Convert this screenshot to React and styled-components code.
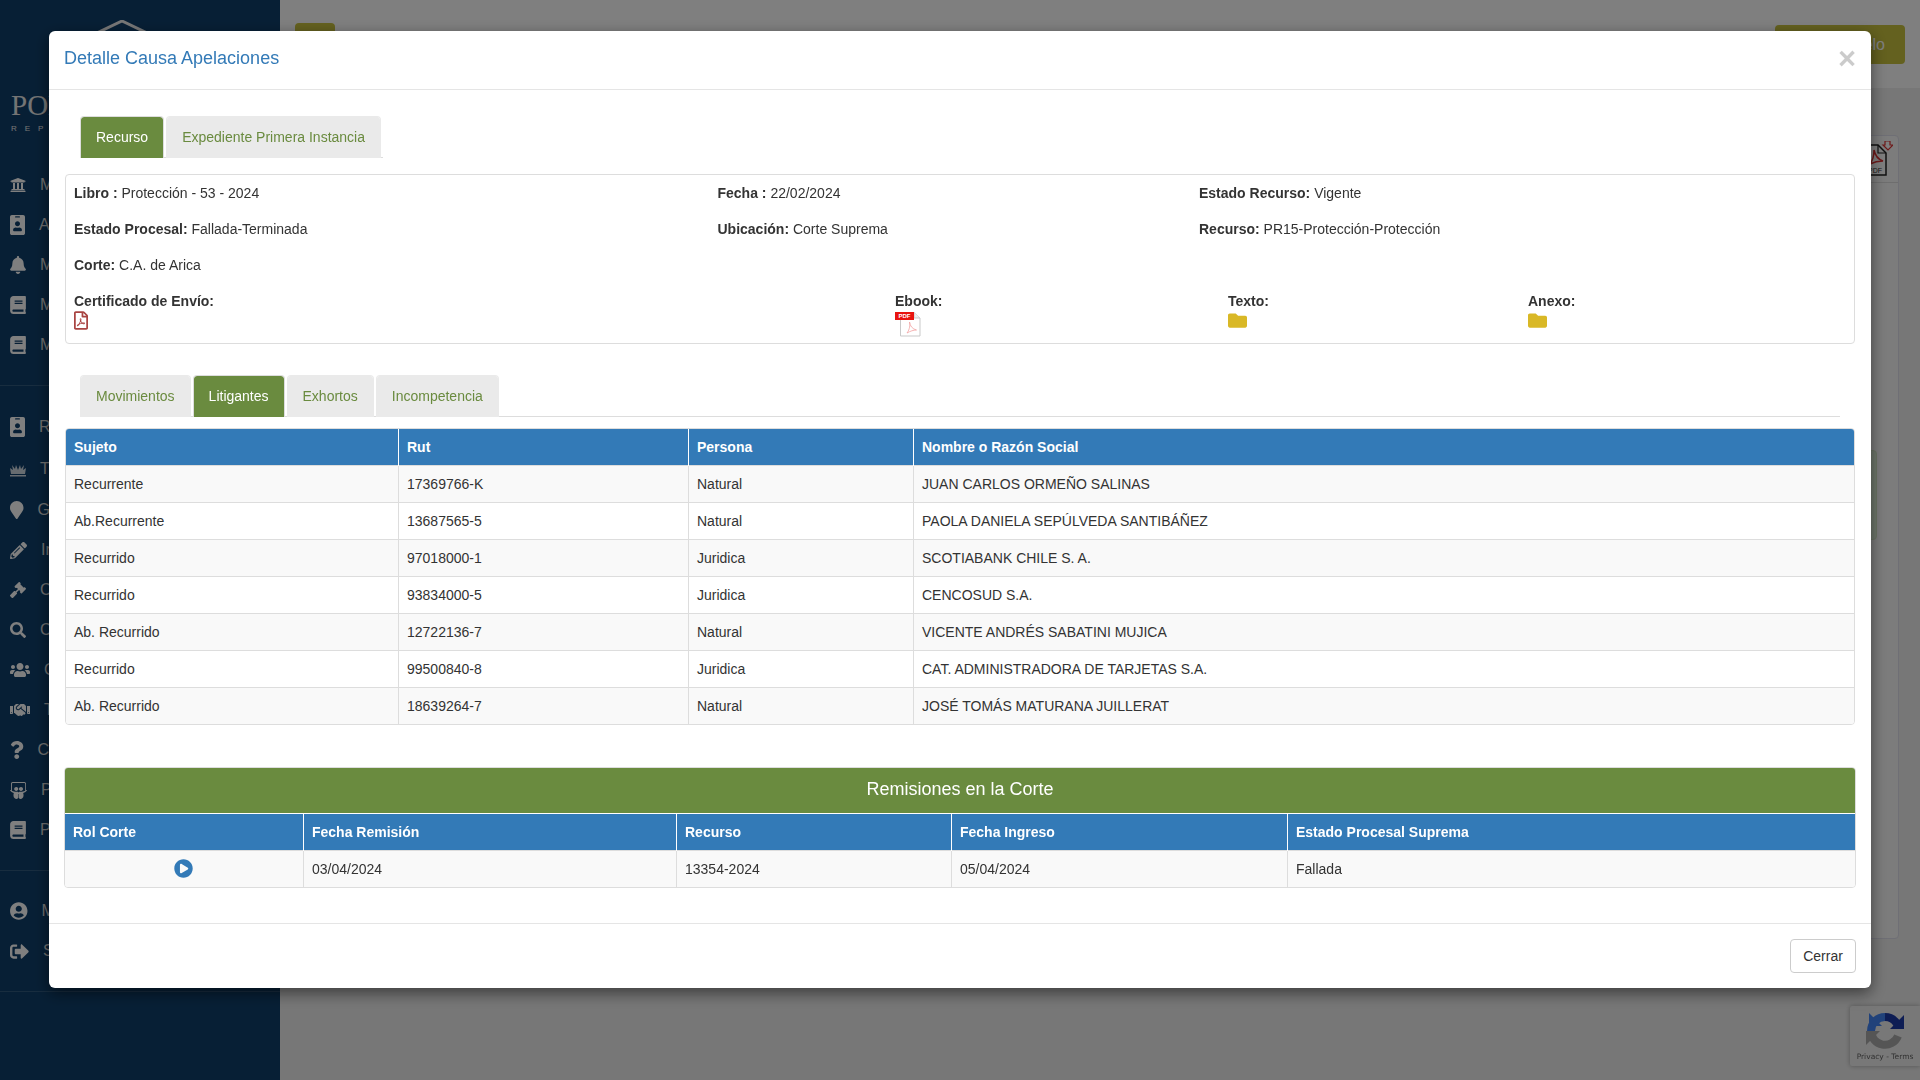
import React from "react";
import styled, { createGlobalStyle } from "styled-components";
import {
  FaUniversity, FaIdBadge, FaBell, FaBook, FaMapMarker, FaPencilAlt, FaGavel, FaSearch,
  FaUsers, FaHandshake, FaQuestion, FaSlideshare, FaUserCircle, FaSignOutAlt,
  FaRegFilePdf, FaFolder, FaPlayCircle,
} from "react-icons/fa";

const GREEN = "#6a8b3f";
const BLUE = "#337ab7";

const Global = createGlobalStyle`
  html, body { margin: 0; padding: 0; height: 100%; overflow: hidden; }
  body { font-family: "Liberation Sans", Arial, sans-serif; font-size: 14px; line-height: 20px; color: #333; background: #eee; }
  * { box-sizing: border-box; }
`;

const Page = styled.div`display: flex; height: 1080px; overflow: hidden;`;
const Sidebar = styled.aside`width: 280px; flex: none; background: #0f3f6b; color: #fff; display: flex; flex-direction: column;`;
const Brand = styled.div`height: 165px; padding: 20px 0 0 11px; display: flex; flex-direction: column; align-items: flex-start;`;
const Roof = styled.svg`display: block; margin-left: 84px; width: 54px; height: 20px; flex: none;`;
const BrandName = styled.div`margin-top: 50px; font-family: "Liberation Serif", serif; font-size: 29px; line-height: 30px; color: #e8e8e8; white-space: nowrap;`;
const BrandSub = styled.div`font-size: 8px; line-height: 12px; letter-spacing: 8px; color: #e8e8e8; white-space: nowrap; margin-top: 3px;`;
const NavGroup = styled.nav`padding: 20px 0; border-bottom: 1px solid rgba(255,255,255,.14);`;
const FirstGroup = styled(NavGroup)`padding-top: 0;`;
const NavItem = styled.div`height: ${p => (p.$tall ? 42 : 40)}px; display: flex; align-items: center; gap: 14px; padding-left: 10px; font-size: 16px; white-space: nowrap; color: #ddd;`;
const NavIcon = styled.span`flex: none; display: block; color: #fff; svg { display: block; width: ${p => p.$w}px; height: ${p => p.$h}px; }`;

const Main = styled.main`flex: 1; min-width: 0; display: flex; flex-direction: column;`;
const TopBar = styled.header`height: 88px; flex: none; background: #fff; display: flex; justify-content: space-between; align-items: flex-start; padding: 23px 15px 0 15px;`;
const SquareBtn = styled.div`width: 40px; height: 40px; border-radius: 4px; background: #c8c23e;`;
const WideBtn = styled.div`width: 130px; height: 39px; margin-top: 2px; border-radius: 4px; background: #c8c23e; color: #fff; font-size: 16px; display: flex; align-items: center; justify-content: flex-end; padding-right: 20px;`;
const Content = styled.div`flex: 1; padding: 47px 21px 0 15px; display: flex; flex-direction: column;`;
const BackPanel = styled.section`height: 804px; background: #f8f8f8; border: 1px solid #dedeea; border-radius: 4px; display: flex; flex-direction: column;`;
const BackHead = styled.div`height: 47px; flex: none; display: flex; justify-content: flex-end; padding: 5px 5px 0 0; border-bottom: 1px solid #ddd;`;
const BackBody = styled.div`padding: 267px 21px 0 15px;`;
const BackAlert = styled.div`height: 90px; background: #dff0d8; border: 1px solid #d6e9c6; border-radius: 4px;`;

const Overlay = styled.div`position: fixed; inset: 0; background: rgba(0,0,0,.5);`;

const Badge = styled.div`position: fixed; right: 0; top: 1006px; width: 70px; height: 60px; background: #f0f0f0; border-radius: 2px 0 0 2px; box-shadow: 0 0 5px rgba(0,0,0,.3); display: flex; flex-direction: column; align-items: center; padding-top: 6px; font-family: "DejaVu Sans", sans-serif; font-size: 7.5px; line-height: 10px; color: #666; white-space: nowrap; span { margin-top: 2px; }`;

const Modal = styled.div`position: fixed; top: 31px; left: 49px; width: 1822px; height: 957px; background: #fff; border-radius: 6px; box-shadow: 0 5px 15px rgba(0,0,0,.5); display: flex; flex-direction: column;`;
const ModalHead = styled.header`height: 59px; flex: none; padding: 0 15px; border-bottom: 1px solid #e5e5e5; display: flex; align-items: center; justify-content: space-between;`;
const ModalTitle = styled.h4`margin: -5px 0 0; font-size: 18px; font-weight: 400; line-height: 26px; color: ${BLUE};`;
const Close = styled.span`font-size: 31px; font-weight: 700; line-height: 26px; color: #000; opacity: .2; margin: -3px 0 0 0;`;
const ModalBody = styled.div`flex: 1; padding: 26px 16px 0 16px; display: flex; flex-direction: column;`;
const ModalFoot = styled.footer`flex: none; height: 65px; padding: 15px; border-top: 1px solid #e5e5e5; display: flex; justify-content: flex-end;`;
const CloseBtn = styled.button`width: 66px; height: 34px; padding: 0; font: inherit; color: #333; background: #fff; border: 1px solid #ccc; border-radius: 4px;`;

const Tabs = styled.ul`list-style: none; margin: 0 ${p => (p.$wide ? "15px" : "0")} 0 15px; padding: 0; display: flex; width: ${p => (p.$wide ? "auto" : "fit-content")}; border-bottom: 1px solid #ddd; height: 42px;`;
const Tab = styled.li`height: 42px; margin-right: 2px; padding: 10px 15px; border-radius: 4px 4px 0 0; border: 1px solid ${p => (p.$active ? "#ddd" : "#eaeaea")}; border-bottom: 0; background: ${p => (p.$active ? GREEN : "#eaeaea")}; background-clip: padding-box; color: ${p => (p.$active ? "#fff" : GREEN)}; white-space: nowrap;`;

const InfoPanel = styled.section`margin-top: 16px; height: 170px; border: 1px solid #ddd; border-radius: 4px; padding: 8px 8px 0;`;
const InfoRow = styled.div`display: grid; grid-template-columns: ${p => p.$cols}; margin-bottom: 16px; height: 20px;`;
const FileRow = styled.div`display: grid; grid-template-columns: 821px 333px 300px 1fr;`;
const FileCell = styled.div`display: flex; flex-direction: column; align-items: flex-start;`;
const Bold = styled.b`font-weight: 700;`;
const PdfLink = styled.span`color: #a94442; display: block; height: 18px; svg { display: block; width: 14px; height: 19px; }`;
const FolderLink = styled.span`color: #d9b826; display: block; svg { display: block; }`;

const SecondTabs = styled.div`margin-top: 31px;`;
const TablePanel = styled.section`margin-top: 11px; height: 297px; border: 1px solid #ddd; border-radius: 4px; overflow: hidden;`;
const Grid = styled.table`width: 100%; border-collapse: collapse; table-layout: fixed;`;
const Th = styled.th`height: 36px; padding: 8px; background: ${BLUE}; color: #fff; font-weight: 700; text-align: left; & + & { border-left: 1px solid #fff; padding-left: 8.5px; }`;
const Tr = styled.tr`background: ${p => (p.$odd ? "#f9f9f9" : "#fff")}; & + & { border-top: 1px solid #ddd; }`;
const Td = styled.td`height: 37px; padding: 8px; border-top: 1px solid #ddd; & + & { border-left: 1px solid #ddd; padding-left: 8.5px; } white-space: nowrap; text-align: ${p => (p.$center ? "center" : "left")}; svg { display: inline-block; vertical-align: top; }`;
const RemPanel = styled.section`margin: 42px -1px 0 -1px; height: 121px; border: 1px solid #ddd; border-radius: 4px; overflow: hidden;`;
const RemTitle = styled.h3`margin: 0; height: 46px; background: ${GREEN}; color: #fff; font-size: 18px; font-weight: 400; line-height: 43px; text-align: center; border-bottom: 1px solid #fff;`;

const PaperPdf = () => (
  <svg width="27" height="26" viewBox="0 0 27 26" style={{ display: "block" }}>
    <path d="M5.5 1.5H19L25 7V25H5.5Z" fill="#fff" stroke="#c9c9c9" />
    <path d="M19 1.5V7H25" fill="#eee" stroke="#c9c9c9" />
    <path d="M12 22c3-4 3-8 2.500-11 .5 4 3 7 7 8-3 0-6 1-9.500 3Z" fill="none" stroke="#f3a3a3" strokeWidth=".8" />
    <rect x="0" y="1" width="19" height="8" fill="#e8140f" />
    <text x="3.500" y="7.300" fontFamily="Liberation Sans, sans-serif" fontSize="6" fontWeight="700" fill="#fff">PDF</text>
  </svg>
);

const ThornIcon = () => (
  <svg viewBox="0 0 16 20" style={{ opacity: 0.8 }}>
    <path d="M0 16h16v1.500H0zM1 15 0 9l3 2-1-5 3 4 1-4 2 5 2-5 1 4 3-4-1 5 3-2-1 6Z" fill="#fff" />
  </svg>
);

const ExportPdf = () => (
  <svg width="28" height="38" viewBox="0 0 28 38">
    <path d="M1 4h12l8 8v22H1Z" fill="#fff" stroke="#222" strokeWidth="1.500" />
    <path d="M13 4v8h8" fill="none" stroke="#222" strokeWidth="1.200" />
    <path d="M5 23c3-4 4-8 4-14 1 5 3 9 9 11-5 0-9 1-13 3Z" fill="none" stroke="#d33" strokeWidth="1.500" />
    <path d="M20 0h5v4h3l-5 5-5-5h2Z" fill="#fff" stroke="#d33" strokeWidth="1.200" />
    <text x="3" y="32" fontFamily="Liberation Sans, sans-serif" fontSize="7" fill="#333">PDF</text>
  </svg>
);

const RecaptchaLogo = () => (
  <svg width="38" height="38" viewBox="0 0 38 38">
    <path d="M5 19A14 14 0 0 1 19 5" fill="none" stroke="#4285f4" strokeWidth="8" />
    <path d="M19 5A14 14 0 0 1 31 12" fill="none" stroke="#1c3aa9" strokeWidth="8" />
    <path d="M38 3v14H24Z" fill="#1c3aa9" />
    <path d="M32 24A14 14 0 0 1 5 19" fill="none" stroke="#ababab" strokeWidth="8" />
    <path d="M0 19h14L0 33Z" fill="#ababab" />
    <path d="M3 1l13 13H3Z" fill="#4285f4" />
  </svg>
);

const nav1 = [[FaUniversity, 16, 16, "Mi Estado Diario"], [FaIdBadge, 15, 20, "Agenda"], [FaBell, 16, 18, "Mis Alertas"], [FaBook, 16, 18, "Mis Causas"], [FaBook, 16, 18, "Mis Escritos"]];
const nav2 = [[FaIdBadge, 15, 20, "Remisiones"], [ThornIcon, 16, 20, "Tribunales"], [FaMapMarker, 13.5, 18, "Geolocalización"], [FaPencilAlt, 17, 17, "Ingreso"], [FaGavel, 16, 16, "Causas"], [FaSearch, 16, 16, "Consulta"], [FaUsers, 20, 16, "Consulta Unificada"], [FaHandshake, 20, 16, "Tramitación"], [FaQuestion, 13.5, 18, "Consultas"], [FaSlideshare, 17, 17, "Presentaciones"], [FaBook, 16, 18, "Preguntas"]];
const nav3 = [[FaUserCircle, 17.5, 18, "Mi Perfil"], [FaSignOutAlt, 19, 19, "Salir"]];

const litigantes = [
  ["Recurrente", "17369766-K", "Natural", "JUAN CARLOS ORMEÑO SALINAS"],
  ["Ab.Recurrente", "13687565-5", "Natural", "PAOLA DANIELA SEPÚLVEDA SANTIBÁÑEZ"],
  ["Recurrido", "97018000-1", "Juridica", "SCOTIABANK CHILE S. A."],
  ["Recurrido", "93834000-5", "Juridica", "CENCOSUD S.A."],
  ["Ab. Recurrido", "12722136-7", "Natural", "VICENTE ANDRÉS SABATINI MUJICA"],
  ["Recurrido", "99500840-8", "Juridica", "CAT. ADMINISTRADORA DE TARJETAS S.A."],
  ["Ab. Recurrido", "18639264-7", "Natural", "JOSÉ TOMÁS MATURANA JUILLERAT"],
];

const NavList = ({ items, tallFirst }) =>
  items.map(([Icon, w, h, label], i) => (
    <NavItem key={label} $tall={tallFirst && i < 2}>
      <NavIcon $w={w} $h={h}><Icon /></NavIcon>
      <span>{label}</span>
    </NavItem>
  ));

export default function App() {
  return (
    <>
      <Global />
      <Page>
        <Sidebar>
          <Brand>
            <Roof viewBox="0 0 54 20"><path d="M0 14 27 1l27 13" fill="none" stroke="#eee" strokeWidth="3" /></Roof>
            <BrandName>PODER JUDICIAL</BrandName>
            <BrandSub>REPÚBLICA</BrandSub>
          </Brand>
          <FirstGroup><NavList items={nav1} /></FirstGroup>
          <NavGroup><NavList items={nav2} tallFirst /></NavGroup>
          <NavGroup><NavList items={nav3} /></NavGroup>
        </Sidebar>
        <Main>
          <TopBar>
            <SquareBtn />
            <WideBtn>Ver Modelo</WideBtn>
          </TopBar>
          <Content>
            <BackPanel>
              <BackHead><ExportPdf /></BackHead>
              <BackBody><BackAlert /></BackBody>
            </BackPanel>
          </Content>
        </Main>
      </Page>
      <Badge>
        <RecaptchaLogo />
        <span>Privacy - Terms</span>
      </Badge>
      <Overlay />
      <Modal>
        <ModalHead>
          <ModalTitle>Detalle Causa Apelaciones</ModalTitle>
          <Close>×</Close>
        </ModalHead>
        <ModalBody>
          <Tabs>
            <Tab $active>Recurso</Tab>
            <Tab>Expediente Primera Instancia</Tab>
          </Tabs>
          <InfoPanel>
            <InfoRow $cols="643.5px 481.5px 1fr">
              <div><Bold>Libro :</Bold> Protección - 53 - 2024</div>
              <div><Bold>Fecha :</Bold> 22/02/2024</div>
              <div><Bold>Estado Recurso:</Bold> Vigente</div>
            </InfoRow>
            <InfoRow $cols="643.5px 481.5px 1fr">
              <div><Bold>Estado Procesal:</Bold> Fallada-Terminada</div>
              <div><Bold>Ubicación:</Bold> Corte Suprema</div>
              <div><Bold>Recurso:</Bold> PR15-Protección-Protección</div>
            </InfoRow>
            <InfoRow $cols="1fr">
              <div><Bold>Corte:</Bold> C.A. de Arica</div>
            </InfoRow>
            <FileRow>
              <FileCell><Bold>Certificado de Envío:</Bold><PdfLink><FaRegFilePdf /></PdfLink></FileCell>
              <FileCell><Bold>Ebook:</Bold><PaperPdf /></FileCell>
              <FileCell><Bold>Texto:</Bold><FolderLink><FaFolder size={19} /></FolderLink></FileCell>
              <FileCell><Bold>Anexo:</Bold><FolderLink><FaFolder size={19} /></FolderLink></FileCell>
            </FileRow>
          </InfoPanel>
          <SecondTabs>
            <Tabs $wide>
              <Tab>Movimientos</Tab>
              <Tab $active>Litigantes</Tab>
              <Tab>Exhortos</Tab>
              <Tab>Incompetencia</Tab>
            </Tabs>
          </SecondTabs>
          <TablePanel>
            <Grid>
              <colgroup><col width="332" /><col width="290" /><col width="225" /><col /></colgroup>
              <thead>
                <tr><Th>Sujeto</Th><Th>Rut</Th><Th>Persona</Th><Th>Nombre o Razón Social</Th></tr>
              </thead>
              <tbody>
                {litigantes.map((row, i) => (
                  <Tr key={row[1]} $odd={i % 2 === 0}>
                    {row.map(c => <Td key={c}>{c}</Td>)}
                  </Tr>
                ))}
              </tbody>
            </Grid>
          </TablePanel>
          <RemPanel>
            <RemTitle>Remisiones en la Corte</RemTitle>
            <Grid>
              <colgroup><col width="238" /><col width="373" /><col width="275" /><col width="336" /><col /></colgroup>
              <thead>
                <tr><Th>Rol Corte</Th><Th>Fecha Remisión</Th><Th>Recurso</Th><Th>Fecha Ingreso</Th><Th>Estado Procesal Suprema</Th></tr>
              </thead>
              <tbody>
                <Tr $odd>
                  <Td $center><FaPlayCircle size={19} color={BLUE} /></Td>
                  <Td>03/04/2024</Td>
                  <Td>13354-2024</Td>
                  <Td>05/04/2024</Td>
                  <Td>Fallada</Td>
                </Tr>
              </tbody>
            </Grid>
          </RemPanel>
        </ModalBody>
        <ModalFoot>
          <CloseBtn>Cerrar</CloseBtn>
        </ModalFoot>
      </Modal>
    </>
  );
}
